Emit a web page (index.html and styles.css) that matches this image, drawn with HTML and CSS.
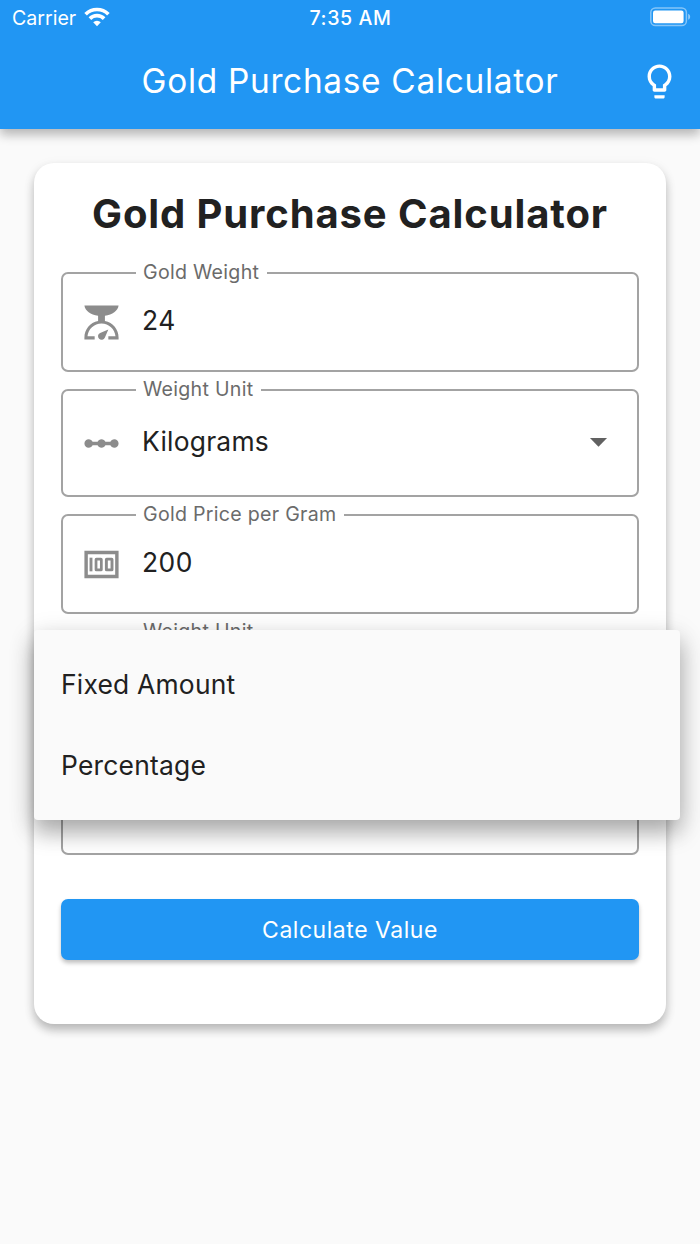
FILE: index.html
```
<!DOCTYPE html>
<html lang="en">
<head>
  <meta charset="UTF-8">
  <meta name="viewport" content="width=device-width, initial-scale=1.0">
  <title>Gold Purchase Calculator</title>
  <link rel="stylesheet" href="styles.css">
</head>
<body>
  <header>
    <div class="status-bar">
      <div class="carrier">
        <span>Carrier</span>
        <svg viewBox="0 0 26 20" width="26" height="20">
          <path d="M1.6 7.2a16.2 16.2 0 0 1 22.8 0M5.9 11.6a10 10 0 0 1 14.2 0" fill="none" stroke="#fff" stroke-width="3.7"/>
          <path d="M13 19.2l-3.8-3.9a5.4 5.4 0 0 1 7.6 0z" fill="#fff"/>
        </svg>
      </div>
      <div class="time">7:35 AM</div>
      <div class="battery">
        <svg viewBox="0 0 42 20" width="42" height="20">
          <rect x="0.8" y="1" width="35.6" height="17.6" rx="4.6" fill="none" stroke="#fff" stroke-opacity="0.45" stroke-width="1.5"/>
          <rect x="3" y="3.6" width="30.6" height="12.6" rx="2.2" fill="#fff"/>
          <path d="M38.2 6.8c2.6 1 2.6 5 0 6z" fill="#fff" fill-opacity="0.5"/>
        </svg>
      </div>
    </div>
    <div class="app-bar">
      <div class="app-title">Gold Purchase Calculator</div>
      <button class="hint-btn" type="button" aria-label="Hint">
        <svg viewBox="0 0 24 24" width="41" height="41">
          <path d="M9 21c0 .55.45 1 1 1h4c.55 0 1-.45 1-1v-1H9v1zm3-19C8.14 2 5 5.14 5 9c0 2.38 1.19 4.47 3 5.74V17c0 .55.45 1 1 1h6c.55 0 1-.45 1-1v-2.26c1.81-1.27 3-3.36 3-5.74 0-3.86-3.14-7-7-7zm2.85 11.1l-.85.6V16h-4v-2.3l-.85-.6A4.997 4.997 0 0 1 7 9c0-2.76 2.24-5 5-5s5 2.24 5 5c0 1.63-.8 3.16-2.15 4.1z"/>
        </svg>
      </button>
    </div>
  </header>

  <main>
    <section class="card">
      <h1>Gold Purchase Calculator</h1>

      <div class="field">
        <span class="label">Gold Weight</span>
        <svg class="icon" viewBox="0 0 24 24">
          <path d="M2 2h20c-.4 3-3.6 5.500-8 6v3.100c4.700.9 8 4.900 8 9.700V22h-6v-1.900h4.200c-.4-4.200-3.900-7.500-8.200-7.500s-7.800 3.300-8.200 7.500H8V22H2v-1.200c0-4.800 3.300-8.800 8-9.700V8C5.600 7.500 2.400 5 2 2z"/>
          <path d="M16 16.100l-2 4.700a2.100 2.100 0 1 1-2.800-2.700z"/>
        </svg>
        <span class="value number">24</span>
      </div>

      <div class="field select">
        <span class="label">Weight Unit</span>
        <svg class="icon" viewBox="0 0 24 24">
          <path d="M19.5 9.5c-1.03 0-1.9.62-2.29 1.5h-2.92c-.39-.88-1.26-1.5-2.29-1.5s-1.9.62-2.29 1.5H6.79c-.39-.88-1.26-1.5-2.29-1.5C3.12 9.5 2 10.62 2 12s1.12 2.5 2.5 2.5c1.03 0 1.9-.62 2.29-1.5h2.92c.39.88 1.26 1.5 2.29 1.5s1.9-.62 2.29-1.5h2.92c.39.88 1.26 1.5 2.29 1.5 1.38 0 2.5-1.12 2.5-2.5s-1.12-2.5-2.5-2.5z"/>
        </svg>
        <span class="value">Kilograms</span>
        <svg class="arrow" viewBox="0 0 24 24">
          <path d="M7 10l5 5 5-5z"/>
        </svg>
      </div>

      <div class="field">
        <span class="label">Gold Price per Gram</span>
        <svg class="icon" viewBox="0 0 24 24">
          <path fill-rule="evenodd" d="M2 4h20v16H2zM4 6v12h16V6z"/>
          <path d="M5 8h1.700v8H5z"/>
          <path fill-rule="evenodd" d="M9 8h2.700a1 1 0 0 1 1 1v6a1 1 0 0 1-1 1H9a1 1 0 0 1-1-1V9a1 1 0 0 1 1-1zm.6 1.700v4.600h1.500V9.700zM15 8h3a1 1 0 0 1 1 1v6a1 1 0 0 1-1 1h-3a1 1 0 0 1-1-1V9a1 1 0 0 1 1-1zm.7 1.700v4.600h1.600V9.700z"/>
        </svg>
        <span class="value number">200</span>
      </div>

      <div class="field select open">
        <span class="label">Weight Unit</span>
        <ul class="menu">
          <li>Fixed Amount</li>
          <li>Percentage</li>
        </ul>
      </div>

      <div class="field"></div>

      <button class="calculate" type="button">Calculate Value</button>
    </section>
  </main>
</body>
</html>
```
FILE: styles.css
```
* {
  box-sizing: border-box;
}

body {
  margin: 0;
  min-height: 100vh;
  background: #fafafa;
  color: #212121;
  font-family: Inter, "Liberation Sans", sans-serif;
}

button {
  border: none;
  font-family: inherit;
  cursor: pointer;
}

/* Header */
header {
  height: 128.5px;
  background: #2196f3;
  color: #fff;
  box-shadow: 0 6px 10px rgba(0, 0, 0, 0.24), 0 2px 12px rgba(0, 0, 0, 0.06);
}

.status-bar {
  display: grid;
  grid-template-columns: 1fr auto 1fr;
  align-items: center;
  height: 34px;
  padding: 0 8px 0 12px;
  font-size: 19.6px;
}

.carrier {
  display: flex;
  align-items: center;
  gap: 8px;
  padding-top: 2px;
}

.carrier svg {
  margin-top: -3px;
}

.time {
  padding: 2px 3px 0 0;
  font-weight: 500;
  letter-spacing: 0.6px;
}

.battery {
  display: flex;
  justify-content: flex-end;
}

.app-bar {
  display: grid;
  grid-template-columns: 1fr auto 1fr;
  align-items: center;
  height: 94px;
  padding: 0 20px;
}

.app-title {
  grid-column: 2;
  font-size: 33.4px;
  font-weight: 400;
  letter-spacing: 0.7px;
}

.hint-btn {
  justify-self: end;
  display: flex;
  padding: 0;
  background: none;
}

.hint-btn svg {
  fill: #fff;
}

/* Card */
main {
  padding: 34.5px 34px;
}

.card {
  display: flex;
  flex-direction: column;
  gap: 17px;
  height: 861px;
  padding: 27px;
  background: #fff;
  border-radius: 20px;
  box-shadow: 0 6px 10px rgba(0, 0, 0, 0.24), 0 3px 14px rgba(0, 0, 0, 0.06);
}

h1 {
  margin: 0 0 17px;
  font-size: 40px;
  line-height: 48px;
  font-weight: 700;
  letter-spacing: 0.88px;
  text-align: center;
  white-space: nowrap;
}

/* Form fields */
.field {
  position: relative;
  display: flex;
  align-items: center;
  height: 100px;
  flex-shrink: 0;
  padding: 0 18px;
  border: 2px solid #a3a3a3;
  border-radius: 7px;
}

.field.select {
  height: 108px;
}

.field.open {
  height: 107px;
}

.label {
  position: absolute;
  top: -14px;
  left: 73px;
  padding: 0 8px 0 7px;
  background: #fff;
  color: #6b6b6b;
  font-size: 19.6px;
  line-height: 24px;
  letter-spacing: 0.28px;
}

.icon {
  width: 41px;
  height: 41px;
  margin-right: 20px;
  fill: #8c8c8c;
}

.value {
  flex: 1;
  padding-bottom: 5px;
  font-size: 26.4px;
  letter-spacing: 0.25px;
}

.value.number {
  letter-spacing: 0.5px;
}

.arrow {
  width: 41px;
  height: 41px;
  margin-bottom: 4px;
  fill: #616161;
}

/* Open dropdown */
.menu {
  position: absolute;
  top: -3px;
  left: -29px;
  z-index: 10;
  width: 645.5px;
  margin: 0;
  padding: 13px 0 15px;
  list-style: none;
  background: #fafafa;
  border-radius: 4px;
  box-shadow: 0 13px 22px rgba(0, 0, 0, 0.26), 0 6px 28px rgba(0, 0, 0, 0.14);
}

.menu li {
  display: flex;
  align-items: center;
  height: 81px;
  padding: 0 27px;
  font-size: 26.4px;
  letter-spacing: 0.22px;
}

.calculate {
  height: 61px;
  flex-shrink: 0;
  margin-top: 27px;
  background: #2196f3;
  border-radius: 7px;
  box-shadow: 0 3px 4px rgba(0, 0, 0, 0.25);
  color: #fff;
  font-size: 23px;
  letter-spacing: 0.53px;
}
```
